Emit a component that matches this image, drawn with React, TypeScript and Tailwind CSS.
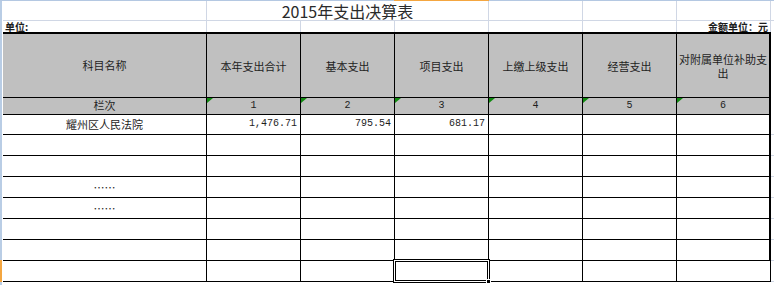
const heads = ['本年支出合计', '基本支出', '项目支出', '上缴上级支出', '经营支出', '对附属单位补助支出'];

type Row = { name?: string; values?: string[] };

const rows: Row[] = [
  { name: '耀州区人民法院', values: ['1,476.71', '795.54', '681.17', '', '', ''] },
  {},
  {},
  { name: '……' },
  { name: '……' },
  {},
  {},
  {},
];

// right edge of a table cell: the last column has the medium border, except on the last row
function edge(col: number, last = false) {
  if (col < 6) return 'border-r border-black';
  return last ? 'border-r border-black' : 'border-r-2 border-black';
}

function Flag() {
  return (
    <svg className="absolute left-0 top-0" width="6" height="5" viewBox="0 0 6 5">
      <polygon points="0,0 6,0 0,5" fill="#108a10" />
    </svg>
  );
}

export default function App() {
  return (
    <div className="flex h-[285px] w-[774px] flex-col overflow-hidden bg-white font-['Noto_Sans_CJK_SC',sans-serif] text-[#1e1e1e]">
      {/* column header edge */}
      <div className="flex h-px shrink-0">
        <div className="w-[394px] bg-[#b4c8e2]" />
        <div className="w-[95px] bg-[#f4a640]" />
        <div className="flex-1 bg-[#b4c8e2]" />
      </div>

      <div className="flex flex-1">
        {/* row header edge */}
        <div className="flex w-[2px] flex-col">
          <div className="h-[259px] bg-[#b9cde5]" />
          <div className="h-[22px] bg-[#f4a640]" />
          <div className="flex-1 bg-[#b9cde5]" />
        </div>

        <div className="ml-px flex w-[771px] flex-col">
          {/* title row */}
          <div className="grid h-[20px] grid-cols-[204px_282px_94px_94px_94px_3px]">
            <div className="border-b border-r border-[#d0d7e5]" />
            <div className="flex items-end justify-center border-b border-r border-[#d0d7e5] text-[16px] leading-[18px] text-[#2a2a2a]">
              2015年支出决算表
            </div>
            <div className="border-b border-r border-[#d0d7e5]" />
            <div className="border-b border-r border-[#d0d7e5]" />
            <div className="border-b border-r border-[#d0d7e5]" />
            <div className="border-b border-[#d0d7e5]" />
          </div>

          {/* unit row */}
          <div className="grid h-[11px] grid-cols-[204px_repeat(6,94px)_3px] text-[10px] font-bold leading-[11px]">
            <div className="whitespace-nowrap border-r border-[#d0d7e5] pl-[2px]">单位:</div>
            <div className="border-r border-[#d0d7e5]" />
            <div className="border-r border-[#d0d7e5]" />
            <div className="border-r border-[#d0d7e5]" />
            <div className="border-r border-[#d0d7e5]" />
            <div className="border-r border-[#d0d7e5]" />
            <div className="whitespace-nowrap border-r border-[#d0d7e5] pr-[2px] text-right">金额单位：元</div>
            <div />
          </div>

          {/* header */}
          <div className="grid h-[66px] grid-cols-[204px_repeat(6,94px)_3px] text-[11px]">
            <div className={`flex items-center justify-center border-b border-t-2 bg-[#c0c0c0] ${edge(0)}`}>科目名称</div>
            {heads.map((h, i) => (
              <div
                key={h}
                className={`flex items-center justify-center border-b border-t-2 bg-[#c0c0c0] px-px text-center leading-[14px] ${edge(i + 1)}`}
              >
                {h}
              </div>
            ))}
            <div />
          </div>

          {/* column numbers */}
          <div className="grid h-[16px] grid-cols-[204px_repeat(6,94px)_3px]">
            <div className={`border-b bg-[#c0c0c0] text-center text-[11px] leading-[15px] ${edge(0)}`}>栏次</div>
            {[1, 2, 3, 4, 5, 6].map((n) => (
              <div
                key={n}
                className={`relative border-b bg-[#c0c0c0] text-center font-['Liberation_Mono',monospace] text-[10px] leading-[16px] ${edge(n)}`}
              >
                <Flag />
                {n}
              </div>
            ))}
            <div />
          </div>

          {/* data */}
          {rows.map((r, ri) => {
            const last = ri === rows.length - 1;
            return (
              <div key={ri} className="grid h-[21px] grid-cols-[204px_repeat(6,94px)_3px]">
                <div className={`border-b text-center text-[11px] leading-[20px] ${edge(0)}`}>{r.name}</div>
                {[0, 1, 2, 3, 4, 5].map((c) => (
                  <div
                    key={c}
                    className={`border-b pr-[3px] text-right font-['Liberation_Mono',monospace] text-[10px] leading-[20px] ${edge(c + 1, last)} ${last && c === 2 ? 'relative' : ''}`}
                  >
                    {r.values?.[c]}
                    {last && c === 2 && (
                      <>
                        <div className="absolute -left-[2px] -top-[2px] z-10 h-[24px] w-[97px] border border-black">
                          <div className="h-full w-full border border-white">
                            <div className="h-full w-full border border-black" />
                          </div>
                        </div>
                        <div className="absolute left-[91px] top-[18px] z-20 h-[5px] w-[5px] border border-white bg-black" />
                      </>
                    )}
                  </div>
                ))}
                <div className="border-b border-[#d0d7e5]" />
              </div>
            );
          })}
        </div>
      </div>
    </div>
  );
}
